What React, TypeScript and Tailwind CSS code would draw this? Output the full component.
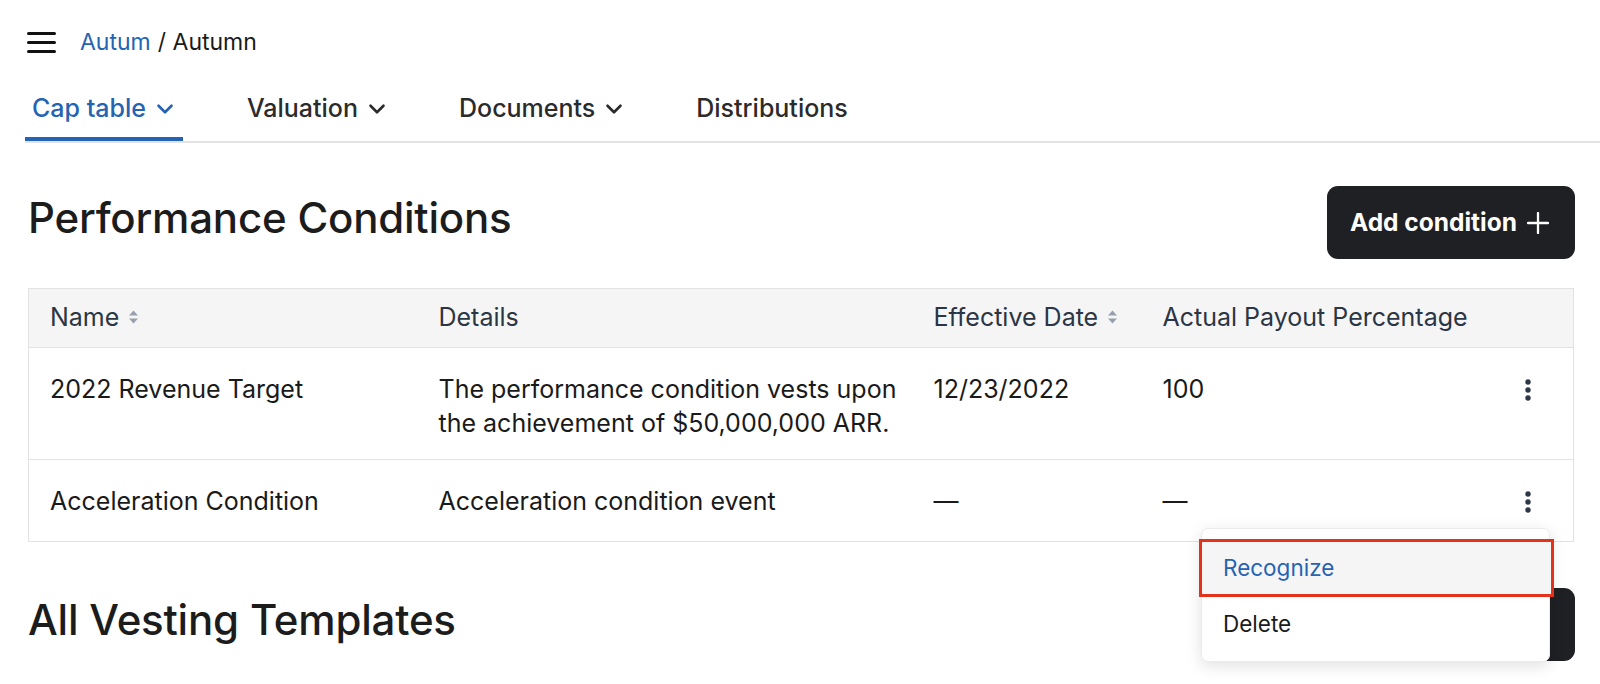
import { ChevronDown } from "lucide-react";

function SortIcon() {
    return (
        <svg width="11" height="16" viewBox="0 0 11 16" className="inline-block ml-[9px] -mt-[4px]">
            <path d="M5.5 1.5 L10 6.5 H1 Z" fill="#97a0ae" />
            <path d="M5.5 14.5 L10 9.5 H1 Z" fill="#97a0ae" />
        </svg>
    );
}

function Kebab() {
    return (
        <svg width="8" height="22" viewBox="0 0 8 22" className="inline-block">
            <circle cx="4" cy="3" r="2.7" fill="#2d3748" />
            <circle cx="4" cy="11" r="2.7" fill="#2d3748" />
            <circle cx="4" cy="19" r="2.7" fill="#2d3748" />
        </svg>
    );
}

function PlusIcon() {
    return (
        <svg width="22" height="22" viewBox="0 0 22 22">
            <path d="M11 1 V21 M1 11 H21" stroke="currentColor" strokeWidth="2.3" strokeLinecap="round" />
        </svg>
    );
}

const tabs = [
    { label: "Cap table", menu: true, active: true },
    { label: "Valuation", menu: true },
    { label: "Documents", menu: true },
    { label: "Distributions", menu: false },
];

export default function App() {
    return (
        <div className="w-full h-screen bg-white text-[#1a1a1a] font-['Inter',sans-serif] overflow-hidden">
            <div className="pl-[25px] pr-[25px]">
                {/* breadcrumb */}
                <div className="flex items-center h-[84px] pl-[2px]">
                    <svg width="29" height="21" viewBox="0 0 29 21" className="mr-[24px]">
                        <path d="M1.5 1.5 H27.5 M1.5 10.5 H27.5 M1.5 19.5 H27.5" stroke="#111" strokeWidth="3" strokeLinecap="round" />
                    </svg>
                    <span className="text-[23px] text-[#2563b3]">Autum</span>
                    <span className="text-[23px] text-[#1a1a1a] ml-[7px]">/ Autumn</span>
                </div>

                {/* tabs */}
                <div className="flex border-b-2 border-[#e3e3e3] h-[59px] -mr-[25px]">
                    {tabs.map((t) => (
                        <div
                            key={t.label}
                            className={
                                "flex items-center gap-[6px] pl-[7px] pr-[5px] pb-[4px] mr-[57px] border-b-[4px] " +
                                (t.active ? "border-[#2563b3] text-[#2563b3]" : "border-transparent text-[#2b2b2b]")
                            }
                        >
                            <span className="text-[25px] font-medium">{t.label}</span>
                            {t.menu && <ChevronDown size={26} strokeWidth={2.4} />}
                        </div>
                    ))}
                </div>

                {/* performance conditions header */}
                <div className="flex items-center justify-between pl-[3px] pt-[43px] pb-[29px]">
                    <h1 className="text-[42px] font-medium text-[#1c1c1c] tracking-[-0.2px] mb-[10px]">Performance Conditions</h1>
                    <button className="flex items-center gap-[10px] h-[73px] pl-[23px] pr-[26px] rounded-[11px] bg-[#1f2023] text-white text-[24.5px] font-bold">
                        Add condition
                        <PlusIcon />
                    </button>
                </div>

                {/* table + menu */}
                <div className="relative ml-[3px] mr-[1px]">
                    <table className="w-full table-fixed border border-[#e2e2e2] border-collapse text-[25px]">
                        <colgroup>
                            <col className="w-[389px]" />
                            <col className="w-[495px]" />
                            <col className="w-[229px]" />
                            <col className="w-[339px]" />
                            <col />
                        </colgroup>
                        <thead>
                            <tr className="bg-[#f5f5f5] h-[59px] text-[#2b3544] text-left">
                                <th className="font-normal pl-[21px]">Name<SortIcon /></th>
                                <th className="font-normal pl-[21px]">Details</th>
                                <th className="font-normal pl-[21px]">Effective Date<SortIcon /></th>
                                <th className="font-normal pl-[21px]">Actual Payout Percentage</th>
                                <th />
                            </tr>
                        </thead>
                        <tbody className="leading-[34px] text-[#1a1a1a]">
                            <tr className="h-[112px] border-t border-[#e2e2e2] align-top">
                                <td className="pl-[21px] pt-[24px]">2022 Revenue Target</td>
                                <td className="pl-[21px] pt-[24px] pr-[8px]">The performance condition vests upon the achievement of $50,000,000 ARR.</td>
                                <td className="pl-[21px] pt-[24px]">12/23/2022</td>
                                <td className="pl-[21px] pt-[24px]">100</td>
                                <td className="pt-[23px] text-right pr-[41px]"><Kebab /></td>
                            </tr>
                            <tr className="h-[82px] border-t border-[#e2e2e2] align-top">
                                <td className="pl-[21px] pt-[24px]">Acceleration Condition</td>
                                <td className="pl-[21px] pt-[24px]">Acceleration condition event</td>
                                <td className="pl-[21px] pt-[24px]">—</td>
                                <td className="pl-[21px] pt-[24px]">—</td>
                                <td className="pt-[23px] text-right pr-[41px]"><Kebab /></td>
                            </tr>
                        </tbody>
                    </table>

                    {/* action menu */}
                    <div className="absolute right-[24px] top-[240px] w-[349px] z-10 bg-white rounded-[7px] shadow-[0_4px_16px_rgba(0,0,0,0.12)] border border-[#ebebeb] pt-[10px] pb-[10px]">
                        <div className="h-[58px] -ml-[3px] -mr-[5px] flex items-center pl-[21px] bg-[#f5f5f5] border-[3px] border-[#e5321d] text-[22.5px] text-[#2563b3]">
                            Recognize
                        </div>
                        <div className="h-[54px] flex items-center pl-[21px] text-[22.5px] text-[#1a1a1a]">
                            Delete
                        </div>
                    </div>
                </div>

                {/* all vesting templates */}
                <div className="flex items-center justify-between pl-[3px] pt-[46px]">
                    <h2 className="text-[42px] font-medium text-[#1c1c1c] tracking-[-0.2px] mb-[10px]">All Vesting Templates</h2>
                    <button className="flex items-center gap-[10px] h-[73px] pl-[23px] pr-[26px] rounded-[11px] bg-[#1f2023] text-white text-[24.5px] font-bold">
                        Add template
                        <PlusIcon />
                    </button>
                </div>
            </div>
        </div>
    );
}
